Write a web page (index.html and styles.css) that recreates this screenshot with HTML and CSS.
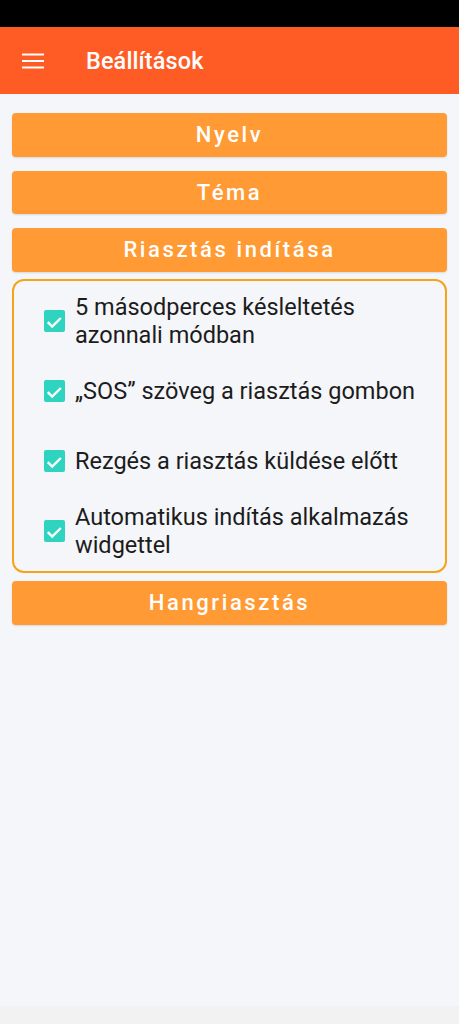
FILE: index.html
```html
<!DOCTYPE html>
<html lang="hu">
<head>
<meta charset="utf-8">
<title>Beállítások</title>
<link rel="stylesheet" href="styles.css">
</head>
<body>
<div class="status-bar"></div>
<header class="app-bar">
  <svg class="menu-icon" width="22" height="18" viewBox="0 0 22 18" aria-hidden="true">
    <path d="M0 2.5h22M0 9h22M0 15.5h22" stroke="#fff" stroke-width="2.2" fill="none"/>
  </svg>
  <h1 class="app-title">Beállítások</h1>
</header>
<main class="settings">
  <button class="section-btn">Nyelv</button>
  <button class="section-btn">Téma</button>
  <button class="section-btn">Riasztás indítása</button>
  <div class="option-box">
    <label class="option">
      <span class="check"><svg viewBox="0 0 21 21"><path d="M3.8 11.2l4.4 4.4 8.6-8.6" stroke="#fff" stroke-width="2.4" fill="none"/></svg></span>
      <span class="option-text">5 másodperces késleltetés azonnali módban</span>
    </label>
    <label class="option">
      <span class="check"><svg viewBox="0 0 21 21"><path d="M3.8 11.2l4.4 4.4 8.6-8.6" stroke="#fff" stroke-width="2.4" fill="none"/></svg></span>
      <span class="option-text">„SOS” szöveg a riasztás gombon</span>
    </label>
    <label class="option">
      <span class="check"><svg viewBox="0 0 21 21"><path d="M3.8 11.2l4.4 4.4 8.6-8.6" stroke="#fff" stroke-width="2.4" fill="none"/></svg></span>
      <span class="option-text">Rezgés a riasztás küldése előtt</span>
    </label>
    <label class="option">
      <span class="check"><svg viewBox="0 0 21 21"><path d="M3.8 11.2l4.4 4.4 8.6-8.6" stroke="#fff" stroke-width="2.4" fill="none"/></svg></span>
      <span class="option-text">Automatikus indítás alkalmazás widgettel</span>
    </label>
  </div>
  <button class="section-btn">Hangriasztás</button>
</main>
<div class="nav-strip"></div>
</body>
</html>
```
FILE: styles.css
```css
* { box-sizing: border-box; }

html, body {
  margin: 0;
  height: 100%;
}

body {
  display: flex;
  flex-direction: column;
  background: #f5f6fa;
  font-family: Roboto, "Noto Sans", sans-serif;
}

.status-bar {
  height: 27px;
  background: #000;
  flex: none;
}

.app-bar {
  height: 67px;
  background: #ff5b25;
  display: flex;
  align-items: center;
  padding-left: 22px;
  flex: none;
}

.menu-icon {
  width: 22px;
  height: 18px;
}

.app-title {
  margin: 0 0 0 42px;
  color: #fff;
  font-size: 23.5px;
  font-weight: 500;
  letter-spacing: 0.1px;
}

.settings {
  flex: 1;
  display: flex;
  flex-direction: column;
  padding: 19px 12px 0;
}

.section-btn {
  height: 43.5px;
  flex: none;
  border: none;
  border-radius: 4px;
  background: #ff9a34;
  color: #fff;
  font-family: Roboto, "Noto Sans", sans-serif;
  font-size: 22px;
  font-weight: 500;
  letter-spacing: 2.6px;
  padding: 0;
  margin-bottom: 14px;
  box-shadow: 0 1px 2px rgba(0, 0, 0, 0.12);
}

.section-btn:nth-of-type(3) {
  margin-bottom: 7.5px;
}

.option-box {
  border: 2px solid #f5a41a;
  border-radius: 12px;
  padding: 12px 12px 12px 30px;
  display: flex;
  flex-direction: column;
  gap: 14px;
  margin-bottom: 8px;
}

.option {
  min-height: 56px;
  display: flex;
  align-items: center;
  gap: 10px;
}

.check {
  flex: none;
  width: 21px;
  height: 22px;
  border-radius: 2px;
  background: #2fd4c0;
  display: flex;
  align-items: center;
}

.check svg {
  width: 21px;
  height: 21px;
}

.option-text {
  font-size: 23.5px;
  line-height: 28px;
  color: #1c1c1c;
  padding-right: 14px;
}

.nav-strip {
  height: 18px;
  background: #f2f2f2;
  flex: none;
}
```
